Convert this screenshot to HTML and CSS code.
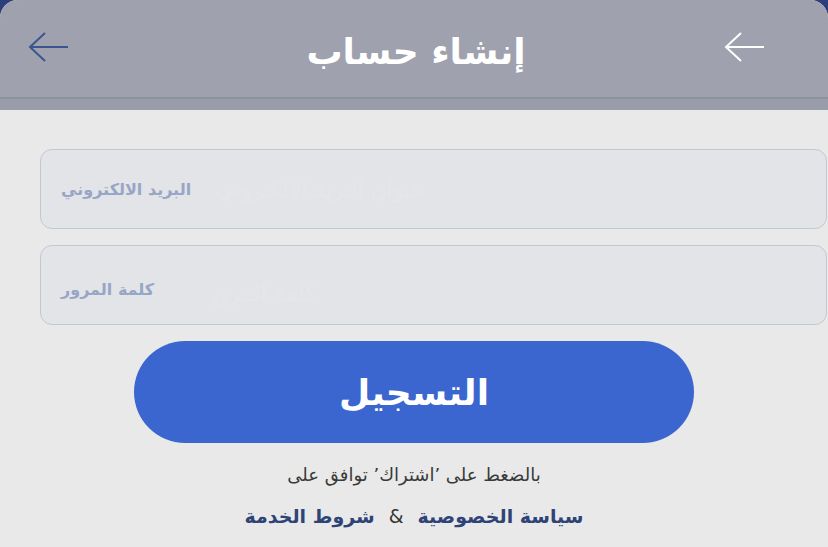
FILE: index.html
```html
<!DOCTYPE html>
<html lang="ar">
<head>
    <meta charset="utf-8">
    <link rel="stylesheet" href="styles.css">
    <title>إنشاء حساب</title>
</head>
<body>
    <div class="screen">
        <div class="sheet">
            <header class="topbar">
                <button class="back left" aria-label="back">
                    <svg width="42" height="32" viewBox="0 0 42 32"><path d="M40 16H2M17 2L2 16l15 14" fill="none" stroke="currentColor" stroke-width="2"/></svg>
                </button>
                <h1 class="title">إنشاء حساب</h1>
                <button class="back right" aria-label="back">
                    <svg width="42" height="32" viewBox="0 0 42 32"><path d="M40 16H2M17 2L2 16l15 14" fill="none" stroke="currentColor" stroke-width="2"/></svg>
                </button>
            </header>
            <div class="band"></div>
            <main class="form">
                <div class="field email">
                    <span class="hint">البريد الالكتروني</span>
                    <span class="ghost">عنوان البريد الالكتروني</span>
                </div>
                <div class="field pass">
                    <span class="hint">كلمة المرور</span>
                    <span class="ghost">كلمة المرور</span>
                </div>
                <button class="signup">التسجيل</button>
                <p class="agree">بالضغط على ’اشتراك’ توافق على</p>
                <p class="links"><a href="#">سياسة الخصوصية</a><span class="amp">&amp;</span><a href="#">شروط الخدمة</a></p>
            </main>
        </div>
    </div>
</body>
</html>
```

FILE: styles.css
```css
*{
    margin: 0px;
    padding: 0px;
    box-sizing: border-box;
}
body{
    width: 828px;
    height: 547px;
    overflow: hidden;
    font-family: "DejaVu Sans", sans-serif;
}
.screen{
    height: 547px;
    background-color: #2c3f7a;
}
.sheet{
    height: 547px;
    background-color: #e9e9e9;
    border-radius: 18px 18px 0 0;
    overflow: hidden;
}
.topbar{
    display: flex;
    align-items: center;
    justify-content: space-between;
    height: 99px;
    padding: 0 62px 0 28px;
    background-color: #9fa1ae;
    border-bottom: 2px solid #8e919e;
}
.back{
    border: none;
    background: none;
    display: flex;
    margin-bottom: 4px;
}
.back.left{
    color: #3a5590;
}
.back.right{
    color: #ffffff;
}
.title{
    color: #ffffff;
    font-size: 36px;
    font-weight: bold;
    margin-left: 38px;
    padding-top: 6px;
}
.band{
    height: 11px;
    background-color: #999ca9;
}
.form{
    display: flex;
    flex-direction: column;
    align-items: center;
    padding-top: 39px;
}
.field{
    position: relative;
    align-self: flex-end;
    width: 787px;
    height: 80px;
    margin-right: 1px;
    background-color: #e3e4e8;
    border: 1px solid #c3c7d0;
    border-radius: 12px;
    display: flex;
    align-items: center;
    padding-left: 20px;
}
.field.pass{
    margin-top: 16px;
    align-items: flex-end;
    padding-bottom: 25px;
}
.hint{
    color: #98a6c6;
    font-size: 16px;
    font-weight: bold;
}
.ghost{
    position: absolute;
    left: 175px;
    color: #e8e9ed;
    font-size: 22px;
    opacity: 0.5;
}
.field.pass .ghost{
    left: 167px;
    bottom: 18px;
}
.signup{
    width: 560px;
    height: 102px;
    margin-top: 16px;
    border: none;
    border-radius: 51px;
    background-color: #3b66d0;
    color: #ffffff;
    font-family: "DejaVu Sans", sans-serif;
    font-size: 36px;
    font-weight: bold;
}
.agree{
    margin-top: 21px;
    color: #3a3a3a;
    font-size: 18px;
}
.links{
    margin-top: 20px;
    display: flex;
    direction: rtl;
    gap: 14px;
    font-size: 19px;
    font-weight: bold;
}
.links a{
    color: #2f4476;
    text-decoration: none;
}
.amp{
    color: #333333;
    font-weight: normal;
}
```
